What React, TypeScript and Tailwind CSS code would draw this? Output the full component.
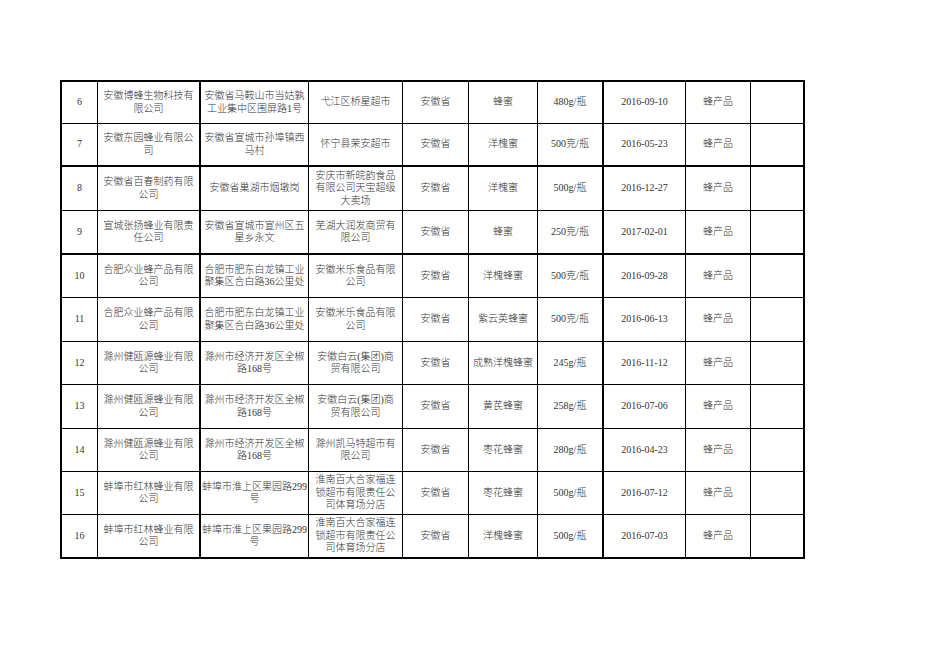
type Row = {
  no: string;
  maker: string;
  address: string;
  seller: string;
  province: string;
  product: string;
  spec: string;
  date: string;
  kind: string;
  h: string;
  thick?: boolean;
};

const rows: Row[] = [
  { no: "6", maker: "安徽博蜂生物科技有限公司", address: "安徽省马鞍山市当姑孰工业集中区围屏路1号", seller: "弋江区桥星超市", province: "安徽省", product: "蜂蜜", spec: "480g/瓶", date: "2016-09-10", kind: "蜂产品", h: "h-[42px]" },
  { no: "7", maker: "安徽东园蜂业有限公司", address: "安徽省宣城市孙埠镇西马村", seller: "怀宁县荣安超市", province: "安徽省", product: "洋槐蜜", spec: "500克/瓶", date: "2016-05-23", kind: "蜂产品", h: "h-[43px]", thick: true },
  { no: "8", maker: "安徽省百春制药有限公司", address: "安徽省巢湖市烟墩岗", seller: "安庆市新皖韵食品有限公司天宝超级大卖场", province: "安徽省", product: "洋槐蜜", spec: "500g/瓶", date: "2016-12-27", kind: "蜂产品", h: "h-[44px]" },
  { no: "9", maker: "宣城张扬蜂业有限责任公司", address: "安徽省宣城市宣州区五星乡永文", seller: "芜湖大润发商贸有限公司", province: "安徽省", product: "蜂蜜", spec: "250克/瓶", date: "2017-02-01", kind: "蜂产品", h: "h-[44px]", thick: true },
  { no: "10", maker: "合肥众业蜂产品有限公司", address: "合肥市肥东白龙镇工业聚集区合白路36公里处", seller: "安徽米乐食品有限公司", province: "安徽省", product: "洋槐蜂蜜", spec: "500克/瓶", date: "2016-09-28", kind: "蜂产品", h: "h-[43px]" },
  { no: "11", maker: "合肥众业蜂产品有限公司", address: "合肥市肥东白龙镇工业聚集区合白路36公里处", seller: "安徽米乐食品有限公司", province: "安徽省", product: "紫云英蜂蜜", spec: "500克/瓶", date: "2016-06-13", kind: "蜂产品", h: "h-[44px]" },
  { no: "12", maker: "滁州健瓯源蜂业有限公司", address: "滁州市经济开发区全椒路168号", seller: "安徽白云(集团)商贸有限公司", province: "安徽省", product: "成熟洋槐蜂蜜", spec: "245g/瓶", date: "2016-11-12", kind: "蜂产品", h: "h-[43px]" },
  { no: "13", maker: "滁州健瓯源蜂业有限公司", address: "滁州市经济开发区全椒路168号", seller: "安徽白云(集团)商贸有限公司", province: "安徽省", product: "黄芪蜂蜜", spec: "258g/瓶", date: "2016-07-06", kind: "蜂产品", h: "h-[44px]" },
  { no: "14", maker: "滁州健瓯源蜂业有限公司", address: "滁州市经济开发区全椒路168号", seller: "滁州凯马特超市有限公司", province: "安徽省", product: "枣花蜂蜜", spec: "280g/瓶", date: "2016-04-23", kind: "蜂产品", h: "h-[43px]" },
  { no: "15", maker: "蚌埠市红林蜂业有限公司", address: "蚌埠市淮上区果园路299号", seller: "淮南百大合家福连锁超市有限责任公司体育场分店", province: "安徽省", product: "枣花蜂蜜", spec: "500g/瓶", date: "2016-07-12", kind: "蜂产品", h: "h-[43px]" },
  { no: "16", maker: "蚌埠市红林蜂业有限公司", address: "蚌埠市淮上区果园路299号", seller: "淮南百大合家福连锁超市有限责任公司体育场分店", province: "安徽省", product: "洋槐蜂蜜", spec: "500g/瓶", date: "2016-07-03", kind: "蜂产品", h: "h-[44px]", thick: true },
];

const cell = "flex items-center justify-center text-center border-black";

function SheetRow({ r }: { r: Row }) {
  const b = r.thick ? "border-b-2" : "border-b";
  return (
    <div className={`grid grid-cols-[36px_103px_108px_94px_66px_69px_66px_82px_65px_54px] ${r.h}`}>
      <div className={`${cell} ${b} border-r`}>{r.no}</div>
      <div className={`${cell} ${b} border-r-2 px-1`}>{r.maker}</div>
      <div className={`${cell} ${b} border-r`}>{r.address}</div>
      <div className={`${cell} ${b} border-r px-[5px]`}>{r.seller}</div>
      <div className={`${cell} ${b} border-r`}>{r.province}</div>
      <div className={`${cell} ${b} border-r`}>{r.product}</div>
      <div className={`${cell} ${b} border-r-2`}>{r.spec}</div>
      <div className={`${cell} ${b} border-r`}>{r.date}</div>
      <div className={`${cell} ${b} border-r`}>{r.kind}</div>
      <div className={`${cell} ${b} border-r-2`}></div>
    </div>
  );
}

export default function App() {
  return (
    <div className="w-[936px] h-[662px] bg-white pt-[80px] pl-[60px] text-[10px] leading-[12.5px] font-light text-[#333] font-['Liberation_Serif','Noto_Sans_CJK_SC',serif]">
      <div className="w-fit border-t-2 border-l-2 border-black">
        {rows.map((r) => (
          <SheetRow key={r.no} r={r} />
        ))}
      </div>
    </div>
  );
}
